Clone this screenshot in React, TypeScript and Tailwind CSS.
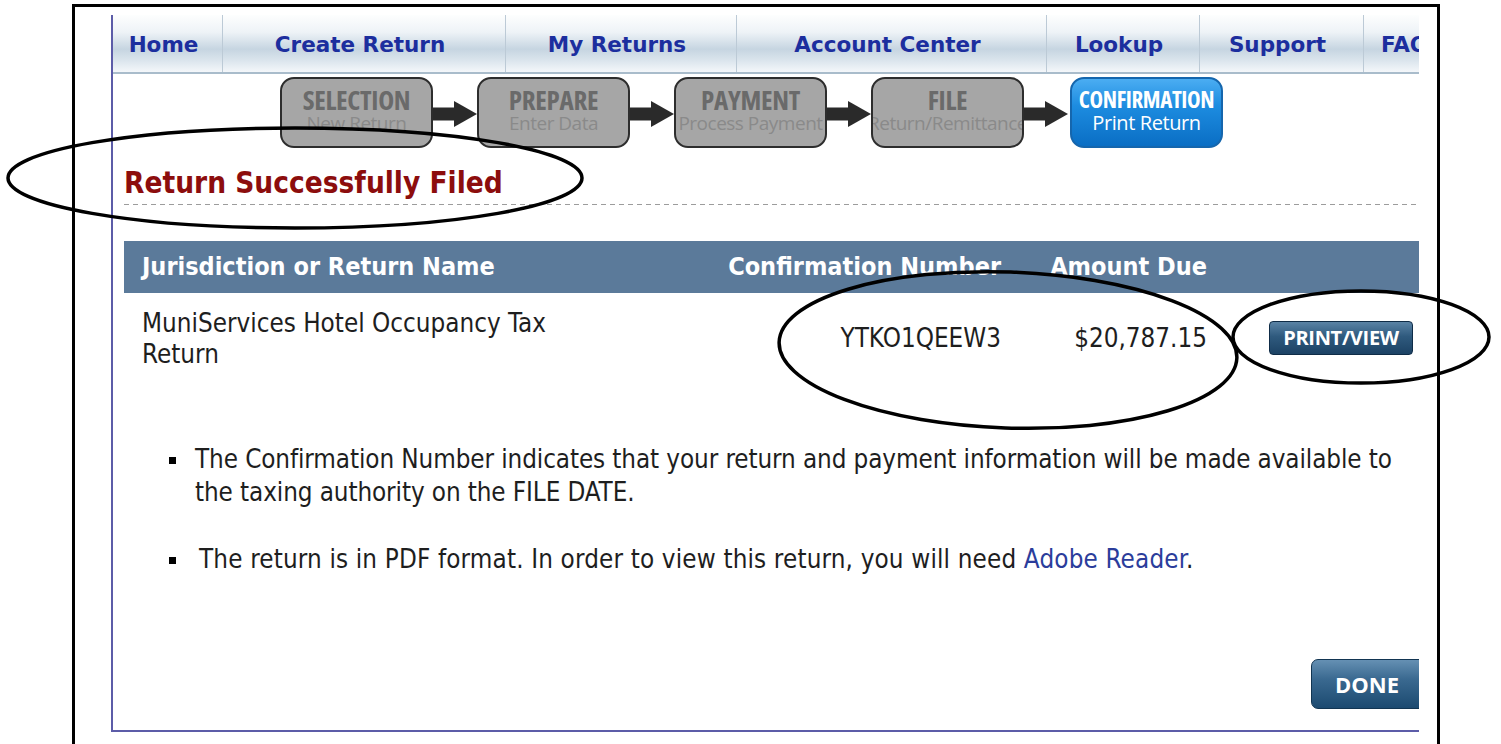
import React from "react"

const navItems = [
  { label: "Home", w: "w-[110px]" },
  { label: "Create Return", w: "w-[283px]" },
  { label: "My Returns", w: "w-[231px]" },
  { label: "Account Center", w: "w-[310px]" },
  { label: "Lookup", w: "w-[153px]" },
  { label: "Support", w: "w-[164px]" },
  { label: "FAQ", w: "w-[90px]" },
]

const steps = [
  { title: "SELECTION", sub: "New Return" },
  { title: "PREPARE", sub: "Enter Data" },
  { title: "PAYMENT", sub: "Process Payment" },
  { title: "FILE", sub: "Return/Remittance" },
]

function Arrow() {
  return (
    <svg width="44" height="28" viewBox="0 0 44 28" className="mt-[3px] shrink-0">
      <rect x="0" y="7.5" width="23" height="13" fill="#2a2a2a" />
      <polygon points="21,1 44,14 21,27" fill="#2a2a2a" />
    </svg>
  )
}

function StepBox({ title, sub }: { title: string; sub: string }) {
  return (
    <div className="w-[153px] h-[71px] shrink-0 rounded-[14px] border-2 border-[#2d2d2d] bg-[#a6a6a6] flex flex-col items-center justify-center pb-[6px] overflow-hidden leading-none [font-family:'Open_Sans',sans-serif]">
      <span className="text-[27px] font-bold text-[#6a6a6a] [font-stretch:87%] tracking-[-0.3px]">{title}</span>
      <span className="mt-[1px] text-[19px] text-[#8a8a8a] [font-stretch:91%] tracking-[-0.5px] whitespace-nowrap">{sub}</span>
    </div>
  )
}

export default function App() {
  return (
    <div className="relative w-[1501px] h-[744px] bg-white overflow-hidden">
      {/* document frame */}
      <div className="ml-[72px] mt-[4px] w-[1368px] h-[800px] border-[3px] border-black pt-[8px] pl-[36px]">
        <div className="w-[1308px] h-[717px] border-l-2 border-b-2 border-[#5c5ca8] overflow-hidden [font-family:'DejaVu_Sans_Condensed','DejaVu_Sans',sans-serif] [font-stretch:condensed]">

          {/* top nav */}
          <div className="flex h-[59px] border-b-2 border-[#a9bccb] bg-[linear-gradient(to_bottom,#fdfefe_0%,#eef3f7_30%,#c6d5e1_60%,#dbe5ed_80%,#f4f7fa_100%)]">
            {navItems.map((n) => (
              <div
                key={n.label}
                className={`${n.w} shrink-0 flex items-center justify-center pr-[8px] pt-[3px] border-r border-[#bccad6] [font-family:'DejaVu_Sans',sans-serif] [font-stretch:normal] text-[21.5px] font-bold text-[#1c2e9e] whitespace-nowrap`}
              >
                {n.label}
              </div>
            ))}
          </div>

          {/* wizard steps */}
          <div className="flex items-center pl-[167px] mt-[3px]">
            {steps.map((s) => (
              <React.Fragment key={s.title}>
                <StepBox title={s.title} sub={s.sub} />
                <Arrow />
              </React.Fragment>
            ))}
            <div className="ml-[2px] w-[153px] h-[71px] shrink-0 rounded-[14px] border-2 border-[#1566ad] bg-[linear-gradient(to_bottom,#4badf2_0%,#1d8ce0_40%,#0a6ec4_100%)] flex flex-col items-center justify-center pb-[5px] leading-none text-white [font-family:'Open_Sans',sans-serif]">
              <span className="text-[23px] font-bold [font-stretch:87%] tracking-[-0.4px]">CONFIRMATION</span>
              <span className="mt-[2px] text-[20px] [font-stretch:93%] tracking-[-0.4px]">Print Return</span>
            </div>
          </div>

          <div className="pl-[11px]">
            <h1 className="mt-[17px] text-[29.5px] leading-[36px] font-bold text-[#8c0d0d]">
              Return Successfully Filed
            </h1>
            <div className="mt-[3px] h-px bg-[repeating-linear-gradient(to_right,#9c9c9c_0_5px,transparent_5px_9px)]" />

            {/* results table */}
            <div className="mt-[36px] h-[52px] bg-[#5b7a9a] flex items-center pl-[18px] text-white font-bold text-[25px] whitespace-nowrap">
              <div className="w-[569px]">Jurisdiction or Return Name</div>
              <div className="w-[290px] text-right">Confirmation Number</div>
              <div className="w-[206px] text-right">Amount Due</div>
            </div>
            <div className="h-[90px] flex items-center pl-[18px] text-[25.8px] text-[#1e1e1e] whitespace-nowrap">
              <div className="w-[569px] leading-[31px] mt-[1px]">
                MuniServices Hotel Occupancy Tax
                <br />
                Return
              </div>
              <div className="w-[290px] text-right">YTKO1QEEW3</div>
              <div className="w-[206px] text-right">$20,787.15</div>
              <button className="ml-[62px] w-[144px] h-[34px] rounded-[4px] border border-[#0f2c47] bg-[linear-gradient(to_bottom,#5a83a5_0%,#2f5a7e_45%,#1c4264_100%)] text-white text-[20px] leading-none font-bold [font-stretch:92%] tracking-[-0.3px] [font-family:'Open_Sans',sans-serif]">
                PRINT/VIEW
              </button>
            </div>

            {/* notes */}
            <ul className="mt-[60px] text-[25.8px] leading-[33px] text-[#1e1e1e]">
              <li className="flex">
                <span className="ml-[45px] mt-[14px] w-[7px] h-[7px] bg-black shrink-0" />
                <span className="ml-[19px] whitespace-nowrap tracking-[-0.1px]">
                  The Confirmation Number indicates that your return and payment information will be made available to
                  <br />
                  the taxing authority on the FILE DATE.
                </span>
              </li>
              <li className="flex mt-[34px]">
                <span className="ml-[45px] mt-[14px] w-[7px] h-[7px] bg-black shrink-0" />
                <span className="ml-[23px] whitespace-nowrap tracking-[0.15px]">
                  The return is in PDF format. In order to view this return, you will need{" "}
                  <a className="text-[#2b3d9b]">Adobe Reader</a>.
                </span>
              </li>
            </ul>

            <div className="mt-[83px] flex justify-end">
              <button className="mr-[-14px] w-[122px] h-[50px] rounded-[7px] border border-[#123552] bg-[linear-gradient(to_bottom,#6590b3_0%,#3a6990_40%,#1c4a70_100%)] text-white text-[22px] leading-none font-bold [font-stretch:90%] pr-[10px] [font-family:'Open_Sans',sans-serif]">
                DONE
              </button>
            </div>
          </div>
        </div>
      </div>

      {/* pen marks */}
      <svg className="absolute inset-0 pointer-events-none" width="1501" height="744" viewBox="0 0 1501 744" fill="none" stroke="black" strokeWidth="3.5">
        <ellipse cx="295" cy="178" rx="287" ry="50" />
        <ellipse cx="1008" cy="350" rx="229" ry="78" transform="rotate(2 1008 350)" />
        <ellipse cx="1361" cy="337" rx="128" ry="46" />
      </svg>
    </div>
  )
}
